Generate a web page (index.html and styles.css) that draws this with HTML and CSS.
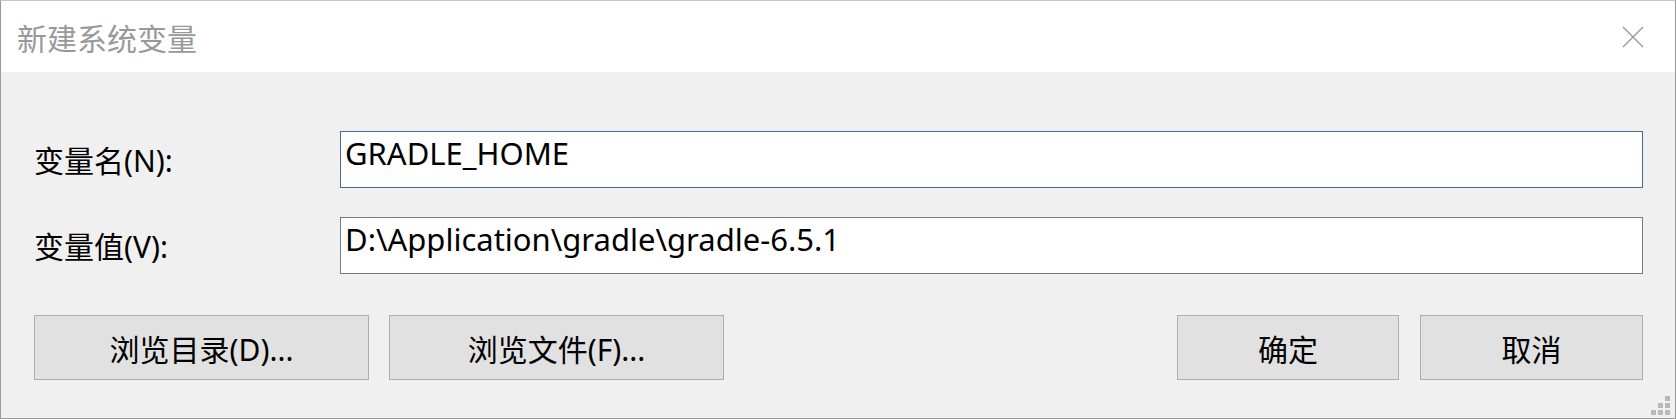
FILE: index.html
```html
<!DOCTYPE html>
<html lang="zh-CN">
<head>
<meta charset="utf-8">
<title>新建系统变量</title>
<link rel="stylesheet" href="styles.css">
</head>
<body>
<div class="window">
  <div class="titlebar">
    <div class="title">新建系统变量</div>
    <div class="close">
      <svg width="22" height="22" viewBox="0 0 22 22"><path d="M1 1 L21 21 M21 1 L1 21" stroke="#9a9a9a" stroke-width="1.4" fill="none"/></svg>
    </div>
  </div>
  <div class="content">
    <div class="form">
      <div class="row">
        <div class="label">变量名(N):</div>
        <div class="field focused">GRADLE_HOME</div>
      </div>
      <div class="row">
        <div class="label">变量值(V):</div>
        <div class="field">D:\Application\gradle\gradle-6.5.1</div>
      </div>
    </div>
    <div class="buttons">
      <div class="group">
        <div class="btn wide">浏览目录(D)...</div>
        <div class="btn wide">浏览文件(F)...</div>
      </div>
      <div class="group right">
        <div class="btn narrow">确定</div>
        <div class="btn narrow">取消</div>
      </div>
    </div>
    <div class="grip">
      <span class="sq s1"></span>
      <span class="sq s2"></span><span class="sq s3"></span>
      <span class="sq s4"></span><span class="sq s5"></span><span class="sq s6"></span>
    </div>
  </div>
</div>
</body>
</html>
```

FILE: styles.css
```css
html, body {
  margin: 0;
  padding: 0;
  background: #3a3a3a;
}
body {
  width: 1676px;
  height: 419px;
  overflow: hidden;
  font-family: "Noto Sans", "Noto Sans CJK SC", sans-serif;
}
.window {
  width: 1674px;
  height: 417px;
  border: 1px solid #9a9a9a;
  border-top-color: #c8c8c8;
  background: #f0f0f0;
  display: flex;
  flex-direction: column;
}
.titlebar {
  height: 71px;
  background: #ffffff;
  display: flex;
  align-items: center;
  justify-content: space-between;
  padding: 0 31px 0 16px;
  flex-shrink: 0;
}
.title {
  font-family: "Noto Sans CJK SC", sans-serif;
  font-size: 30px;
  color: #999999;
  line-height: 1;
}
.close {
  width: 22px;
  height: 22px;
  display: flex;
}
.content {
  position: relative;
  flex: 1;
  padding: 59px 32px 0 32px;
}
.form {
  display: flex;
  flex-direction: column;
  gap: 29px;
}
.row {
  display: flex;
  align-items: center;
}
.label {
  width: 306px;
  padding-left: 1px;
  font-size: 30px;
  line-height: 40px;
  color: #000;
  padding-top: 2px;
}
.field {
  flex: 1;
  height: 52px;
  background: #ffffff;
  border: 1px solid #7a7a7a;
  padding: 3px 4px 0 4px;
  font-size: 31px;
  line-height: 36px;
  color: #000;
}
.field.focused {
  border-color: #3f6f9f;
}
.buttons {
  margin-top: 41px;
  display: flex;
  justify-content: space-between;
  padding-left: 1px;
}
.group {
  display: flex;
  gap: 20px;
}
.group.right {
  gap: 21px;
}
.btn {
  background: #e1e1e1;
  border: 1px solid #adadad;
  display: flex;
  align-items: center;
  justify-content: center;
  font-size: 30px;
  line-height: 40px;
  color: #000;
  padding-top: 4px;
  box-sizing: border-box;
  height: 65px;
}
.btn.wide {
  width: 335px;
}
.btn.narrow {
  width: 222px;
}
.btn.narrow + .btn.narrow {
  width: 223px;
}
.grip {
  position: absolute;
  right: 5px;
  bottom: 3px;
  width: 19px;
  height: 19px;
}
.sq {
  position: absolute;
  width: 5px;
  height: 5px;
  background: #b8b8b8;
}
.s1 { left: 14px; top: 0; }
.s2 { left: 7px; top: 7px; }
.s3 { left: 14px; top: 7px; }
.s4 { left: 0; top: 14px; }
.s5 { left: 7px; top: 14px; }
.s6 { left: 14px; top: 14px; }
```
